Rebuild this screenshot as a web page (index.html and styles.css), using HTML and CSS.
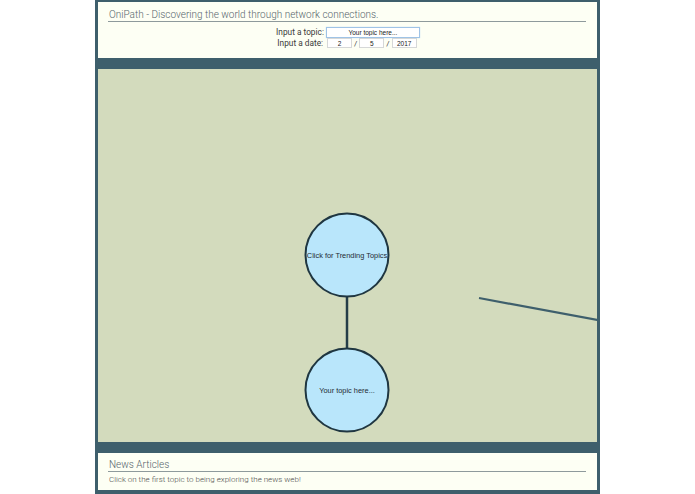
FILE: index.html
```html
<!DOCTYPE html>
<html>
<head>
<meta charset="utf-8">
<link rel="stylesheet" href="styles.css">
</head>
<body>
<div class="app">
  <header class="panel header">
    <h1 class="title">OniPath - Discovering the world through network connections.</h1>
    <div class="form">
      <div class="row"><label>Input a topic:</label><input class="topic" type="text" value="Your topic here..."></div>
      <div class="row"><label>Input a date:</label><input class="date" type="text" value="2"><span class="sep">/</span><input class="date" type="text" value="5"><span class="sep">/</span><input class="date year" type="text" value="2017"></div>
    </div>
  </header>
  <main class="canvas">
    <svg class="graph" width="499" height="373" viewBox="0 0 499 373">
      <line x1="249" y1="228" x2="249" y2="279" stroke="#243d48" stroke-width="2.5"/>
      <line x1="381" y1="229" x2="510" y2="253" stroke="#3e5f6c" stroke-width="2.2"/>
      <circle cx="249" cy="186" r="41.5" fill="#b9e6fb" stroke="#1f3641" stroke-width="2"/>
      <circle cx="249" cy="321" r="41.5" fill="#b9e6fb" stroke="#1f3641" stroke-width="2"/>
      <text x="249" y="189" class="node-label">Click for Trending Topics</text>
      <text x="249" y="324" class="node-label">Your topic here...</text>
    </svg>
  </main>
  <section class="panel news">
    <h2 class="title">News Articles</h2>
    <p class="msg">Click on the first topic to being exploring the news web!</p>
  </section>
</div>
</body>
</html>
```
FILE: styles.css
```css
html, body {
  margin: 0;
  padding: 0;
  background: #ffffff;
}
body {
  font-family: Roboto, "Liberation Sans", sans-serif;
}
.app {
  width: 499px;
  margin: 0 auto;
  background: #3e5f6c;
  padding: 2px 3px 4px 3px;
  display: flex;
  flex-direction: column;
  gap: 11px;
  height: 488px;
}
.panel {
  background: #fdfff4;
  padding: 0 11px 0 10px;
}
.header {
  height: 56px;
  box-sizing: border-box;
  padding-top: 6px;
}
.title {
  margin: 0;
  font-size: 10px;
  font-weight: 300;
  line-height: 13px;
  color: #56666d;
  padding-left: 1px;
  border-bottom: 1px solid #8e9a9c;
}
.form {
  margin-top: 5px;
  display: flex;
  flex-direction: column;
  align-items: center;
  gap: 1px;
  padding-left: 2px;
}
.row {
  display: flex;
  align-items: center;
  height: 10px;
  font-size: 8.3px;
  color: #3a3a3a;
}
.row label {
  margin-right: 2px;
}
input {
  font-family: "Liberation Sans", Arial, sans-serif;
  font-size: 6.5px;
  color: #222;
  text-align: center;
  padding: 0;
  margin: 0;
  box-sizing: border-box;
  height: 10px;
  border: 1px solid #d6d8d8;
  background: #ffffff;
  outline: none;
}
.topic {
  width: 94px;
  height: 11px;
  border: 1px solid #9fc3e6;
  box-shadow: 0 0 1px #b9d5f0;
}
.date {
  width: 25px;
  margin: 0 2px;
}
.year {
  width: 25px;
}
.sep {
  font-size: 8px;
  color: #444;
}
.canvas {
  height: 373px;
  background: #d3dbbd;
  overflow: hidden;
}
.graph {
  display: block;
}
.node-label {
  font-family: "Liberation Sans", Arial, sans-serif;
  font-size: 7.4px;
  fill: #1d2b33;
  text-anchor: middle;
}
.news {
  height: 37px;
  box-sizing: border-box;
  padding-top: 5px;
}
.msg {
  margin: 3px 0 0 1px;
  font-size: 8px;
  font-weight: 300;
  color: #4a4a4a;
}
```
